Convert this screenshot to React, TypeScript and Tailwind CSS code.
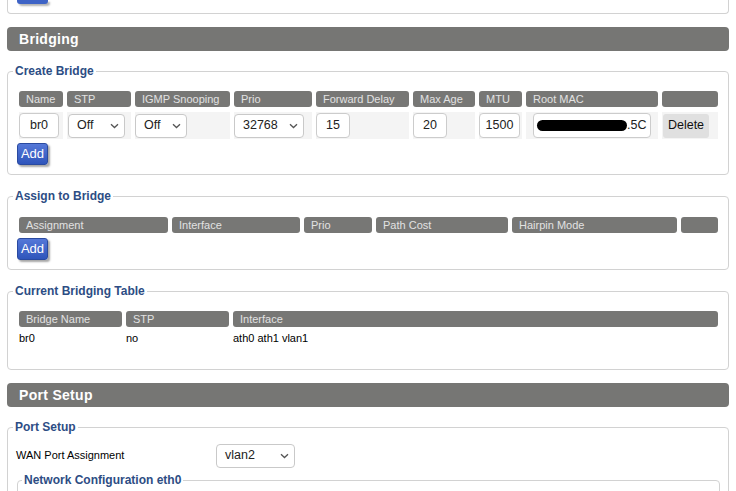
import React from "react";

const th = "h-4 truncate rounded-[3px] bg-[#777775] pl-[7px] text-[11px] leading-4 text-[#e2e2e2]";
const legend = "-ml-[6px] px-[2px] text-[12px] font-bold leading-[14px] text-[#2d4d84]";
const fieldset = "rounded-[4px] border border-[#d2d2d2]";

function Chevron() {
  return (
    <svg width="9" height="6" viewBox="0 0 9 6" fill="none">
      <path d="M1 1.2l3.5 3.3L8 1.2" stroke="#555" strokeWidth="1.3" />
    </svg>
  );
}

function Select({ value, width }: { value: string; width: string }) {
  return (
    <div
      className={`flex h-[24px] items-center justify-between rounded-[4px] border border-[#c9c9c9] bg-white pl-[8px] pr-[5px] text-[12.5px] text-[#222] ${width}`}
    >
      <span>{value}</span>
      <Chevron />
    </div>
  );
}

function Input({ value, width }: { value: string; width: string }) {
  return (
    <div
      className={`flex h-[25px] items-center justify-center rounded-[4px] border border-[#cccccc] bg-white text-[12.5px] text-[#222] ${width}`}
    >
      {value}
    </div>
  );
}

function AddButton() {
  return (
    <div className="flex">
      <button className="-ml-[2px] h-[22px] w-[31px] rounded-[3px] border border-[#2a4aa0] bg-gradient-to-b from-[#5578d8] to-[#2f55bb] text-[13px] leading-[20px] text-white shadow-[2px_2px_2px_rgba(0,0,0,0.35)]">
        Add
      </button>
    </div>
  );
}

export default function App() {
  return (
    <div className="min-h-screen bg-white px-[7px] font-['Liberation_Sans',Arial,sans-serif]">
      {/* tail of the previous box */}
      <div className="h-[14px] rounded-b-[4px] border border-t-0 border-[#d2d2d2]">
        <div className="ml-[9px] h-[4px] w-[31px] rounded-b-[3px] bg-[#3e63c6] shadow-[2px_2px_2px_rgba(0,0,0,0.3)]" />
      </div>

      <div className="mt-[13px] h-[24px] rounded-[4px] bg-[#767674] pl-[12px] text-[14px] font-bold leading-[24px] tracking-[0.3px] text-white">
        Bridging
      </div>

      {/* Create Bridge */}
      <fieldset className={`mt-[13px] ${fieldset} pl-[11px] pr-[10px] pb-[9px]`}>
        <legend className={legend}>Create Bridge</legend>
        <div className="mt-[13px] grid grid-cols-[44px_64px_95px_78px_93px_62px_43px_132px_56px] gap-x-[4px] gap-y-[5px]">
          <div className={th}>Name</div>
          <div className={th}>STP</div>
          <div className={th}>IGMP Snooping</div>
          <div className={th}>Prio</div>
          <div className={th}>Forward Delay</div>
          <div className={th}>Max Age</div>
          <div className={th}>MTU</div>
          <div className={th}>Root MAC</div>
          <div className={th}></div>

          <div className="flex h-[27px] items-center bg-[#f4f4f4]">
            <Input value="br0" width="w-[40px]" />
          </div>
          <div className="flex h-[27px] items-center bg-[#f4f4f4] pl-[1px]">
            <Select value="Off" width="w-[57px]" />
          </div>
          <div className="flex h-[27px] items-center bg-[#f4f4f4]">
            <Select value="Off" width="w-[52px]" />
          </div>
          <div className="flex h-[27px] items-center bg-[#f4f4f4]">
            <Select value="32768" width="w-[70px]" />
          </div>
          <div className="flex h-[27px] items-center bg-[#f4f4f4]">
            <Input value="15" width="w-[34px]" />
          </div>
          <div className="flex h-[27px] items-center bg-[#f4f4f4]">
            <Input value="20" width="w-[34px]" />
          </div>
          <div className="flex h-[27px] items-center bg-[#f4f4f4]">
            <Input value="1500" width="w-[41px]" />
          </div>
          <div className="flex h-[27px] items-center bg-[#f4f4f4] pl-[7px]">
            <div className="flex h-[25px] w-[118px] items-center rounded-[4px] border border-[#cccccc] bg-white pl-[3px] text-[12.5px] text-[#222]">
              <span className="h-[11px] w-[90px] rounded-full bg-black" />
              <span>.5C</span>
            </div>
          </div>
          <div className="flex h-[27px] items-center bg-[#f4f4f4] pl-[1px]">
            <button className="h-[24px] w-[46px] rounded-[3px] bg-[#e0e0e0] text-[12.5px] text-[#111]">
              Delete
            </button>
          </div>
        </div>
        <div className="mt-[4px]">
          <AddButton />
        </div>
      </fieldset>

      {/* Assign to Bridge */}
      <fieldset className={`mt-[14px] ${fieldset} pl-[11px] pr-[10px] pb-[9px]`}>
        <legend className={legend}>Assign to Bridge</legend>
        <div className="mt-[14px] grid grid-cols-[149px_128px_68px_132px_165px_37px] gap-x-[4px]">
          <div className={th}>Assignment</div>
          <div className={th}>Interface</div>
          <div className={th}>Prio</div>
          <div className={th}>Path Cost</div>
          <div className={th}>Hairpin Mode</div>
          <div className={th}></div>
        </div>
        <div className="mt-[5px]">
          <AddButton />
        </div>
      </fieldset>

      {/* Current Bridging Table */}
      <fieldset className={`mt-[14px] ${fieldset} pl-[11px] pr-[10px] pb-[23px]`}>
        <legend className={legend}>Current Bridging Table</legend>
        <div className="mt-[13px] grid grid-cols-[103px_103px_1fr] gap-x-[4px] text-[11px] text-black">
          <div className={th}>Bridge Name</div>
          <div className={th}>STP</div>
          <div className={th}>Interface</div>
          <div className="mt-[3px] leading-4">br0</div>
          <div className="mt-[3px] leading-4">no</div>
          <div className="mt-[3px] leading-4">ath0 ath1 vlan1</div>
        </div>
      </fieldset>

      <div className="mt-[13px] h-[24px] rounded-[4px] bg-[#767674] pl-[12px] text-[14px] font-bold leading-[24px] tracking-[0.3px] text-white">
        Port Setup
      </div>

      {/* Port Setup */}
      <fieldset className={`mt-[13px] ${fieldset} px-[8px] pb-[8px]`}>
        <legend className="-ml-[3px] px-[2px] text-[12px] font-bold leading-[14px] text-[#2d4d84]">
          Port Setup
        </legend>
        <div className="mt-[10px] flex h-[23px] items-center">
          <span className="w-[200px] text-[11px] text-black">WAN Port Assignment</span>
          <Select value="vlan2" width="w-[79px]" />
        </div>
        <fieldset className={`ml-[1px] mt-[6px] h-[40px] ${fieldset}`}>
          <legend className="ml-[4px] px-[2px] text-[12px] font-bold leading-[14px] text-[#2d4d84]">
            Network Configuration eth0
          </legend>
        </fieldset>
      </fieldset>
    </div>
  );
}
